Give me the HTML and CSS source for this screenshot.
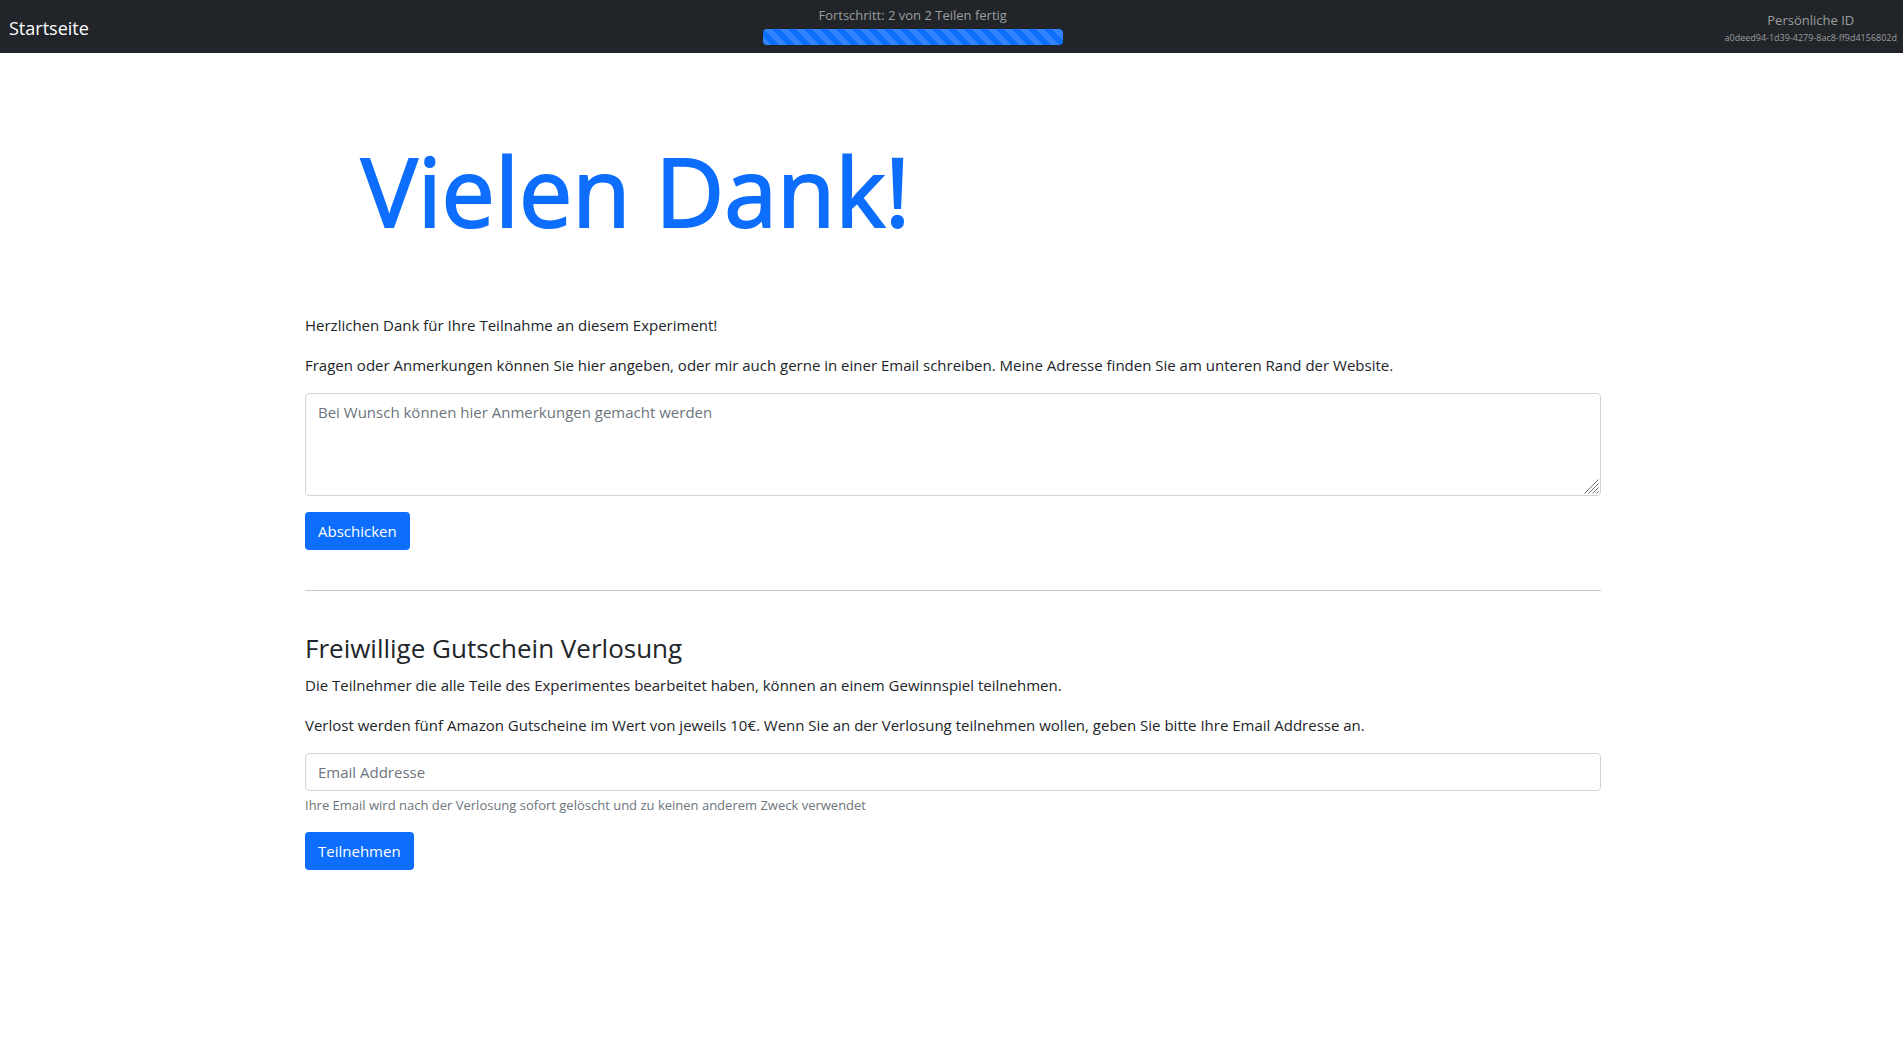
FILE: index.html
```html
<!DOCTYPE html>
<html lang="de">
<head>
<meta charset="utf-8">
<meta name="viewport" content="width=device-width, initial-scale=1">
<title>Vielen Dank!</title>
<link rel="stylesheet" href="styles.css">
</head>
<body>
<nav class="navbar">
  <a class="brand" href="#">Startseite</a>
  <div class="progress-group">
    <span class="nav-text">Fortschritt: 2 von 2 Teilen fertig</span>
    <div class="progress" role="progressbar" aria-label="Fortschritt" aria-valuenow="2" aria-valuemin="0" aria-valuemax="2">
      <div class="progress-bar" style="width: 100%"></div>
    </div>
  </div>
  <div class="personal-id">
    <span class="nav-text">Persönliche ID</span>
    <span class="id-value">a0deed94-1d39-4279-8ac8-ff9d4156802d</span>
  </div>
</nav>
<main class="container">
  <h1 class="title">Vielen Dank!</h1>
  <p>Herzlichen Dank für Ihre Teilnahme an diesem Experiment!</p>
  <p>Fragen oder Anmerkungen können Sie hier angeben, oder mir auch gerne in einer Email schreiben. Meine Adresse finden Sie am unteren Rand der Website.</p>
  <form>
    <div class="comment">
      <textarea class="control comment-box" aria-label="Anmerkungen" placeholder="Bei Wunsch können hier Anmerkungen gemacht werden"></textarea>
      <svg class="grip" width="15" height="15" viewBox="0 0 15 15" aria-hidden="true"><path d="M0.5 14.5 14.5 0.5M4.500 14.500 14.500 4.500M8.500 14.500 14.500 8.500M12.500 14.500 14.500 12.500"/></svg>
    </div>
    <button class="btn" type="button">Abschicken</button>
  </form>
  <hr class="divider">
  <h2 class="subtitle">Freiwillige Gutschein Verlosung</h2>
  <p>Die Teilnehmer die alle Teile des Experimentes bearbeitet haben, können an einem Gewinnspiel teilnehmen.</p>
  <p>Verlost werden fünf Amazon Gutscheine im Wert von jeweils 10€. Wenn Sie an der Verlosung teilnehmen wollen, geben Sie bitte Ihre Email Addresse an.</p>
  <form>
    <input class="control" type="email" aria-label="Email Addresse" aria-describedby="email-help" placeholder="Email Addresse">
    <small class="help" id="email-help">Ihre Email wird nach der Verlosung sofort gelöscht und zu keinen anderem Zweck verwendet</small>
    <button class="btn" type="button">Teilnehmen</button>
  </form>
</main>
</body>
</html>
```
FILE: styles.css
```css
*, *::before, *::after { box-sizing: border-box; }

body {
  margin: 0;
  background: #fff;
  color: #212529;
  font-family: "Segoe UI", "Open Sans", "Noto Sans", sans-serif;
  font-size: 15px;
  line-height: 24px;
}

.navbar {
  display: flex;
  align-items: center;
  justify-content: space-between;
  height: 53px;
  padding: 0 6px 0 9px;
  background: #212529;
  color: #9b9d9f;
}

.brand {
  margin-right: 12px;
  padding-top: 3px;
  color: #fff;
  font-size: 18px;
  line-height: 30px;
  text-decoration: none;
}

.nav-text { font-size: 13px; line-height: 20px; }

.progress-group {
  display: flex;
  flex-direction: column;
  align-items: center;
  gap: 4px;
  width: 300px;
  padding-bottom: 3px;
}

.progress {
  width: 100%;
  height: 16px;
  overflow: hidden;
  border-radius: 4px;
  background: #e9ecef;
}

.progress-bar {
  height: 100%;
  background-color: #0d6efd;
  background-image: linear-gradient(45deg, rgba(255,255,255,.15) 25%, transparent 25%, transparent 50%, rgba(255,255,255,.15) 50%, rgba(255,255,255,.15) 75%, transparent 75%, transparent);
  background-size: 16px 16px;
}

.personal-id {
  display: flex;
  flex-direction: column;
  align-items: center;
  padding-top: 2px;
}

.id-value { font-size: 9px; line-height: 15px; }

.container {
  box-sizing: content-box;
  max-width: 1296px;
  margin: 0 auto;
  padding: 44px 12px 48px 15px;
}

.title {
  margin: 0 0 30px;
  padding: 35px 56px;
  color: #0d6efd;
  font-size: 95px;
  font-weight: 500;
  line-height: 116px;
  -webkit-text-stroke: 2px #0d6efd;
}

p { margin: 0 0 16px; }

.comment { position: relative; margin-bottom: 16px; }

.control {
  display: block;
  width: 100%;
  padding: 6px 12px;
  border: 1px solid #ced4da;
  border-radius: 4px;
  background: #fff;
  color: #212529;
  font: inherit;
}

.control::placeholder { color: #6c757d; opacity: 1; }

.comment-box { height: 103px; resize: none; }

.grip {
  position: absolute;
  right: 2px;
  bottom: 2px;
  fill: none;
  stroke: #707070;
  stroke-width: 1;
}

.btn {
  display: block;
  padding: 7px 13px;
  border: 0;
  border-radius: 4px;
  background: #0d6efd;
  color: #fff;
  font: inherit;
}

.divider {
  margin: 40px 0;
  border: 0;
  border-top: 1px solid #c7c8c9;
}

.subtitle {
  margin: 0 0 8px;
  font-size: 26px;
  font-weight: 400;
  line-height: 34px;
}

.help {
  display: block;
  margin: 4px 0 16px;
  color: #6c757d;
  font-size: 13px;
  line-height: 21px;
}
```
